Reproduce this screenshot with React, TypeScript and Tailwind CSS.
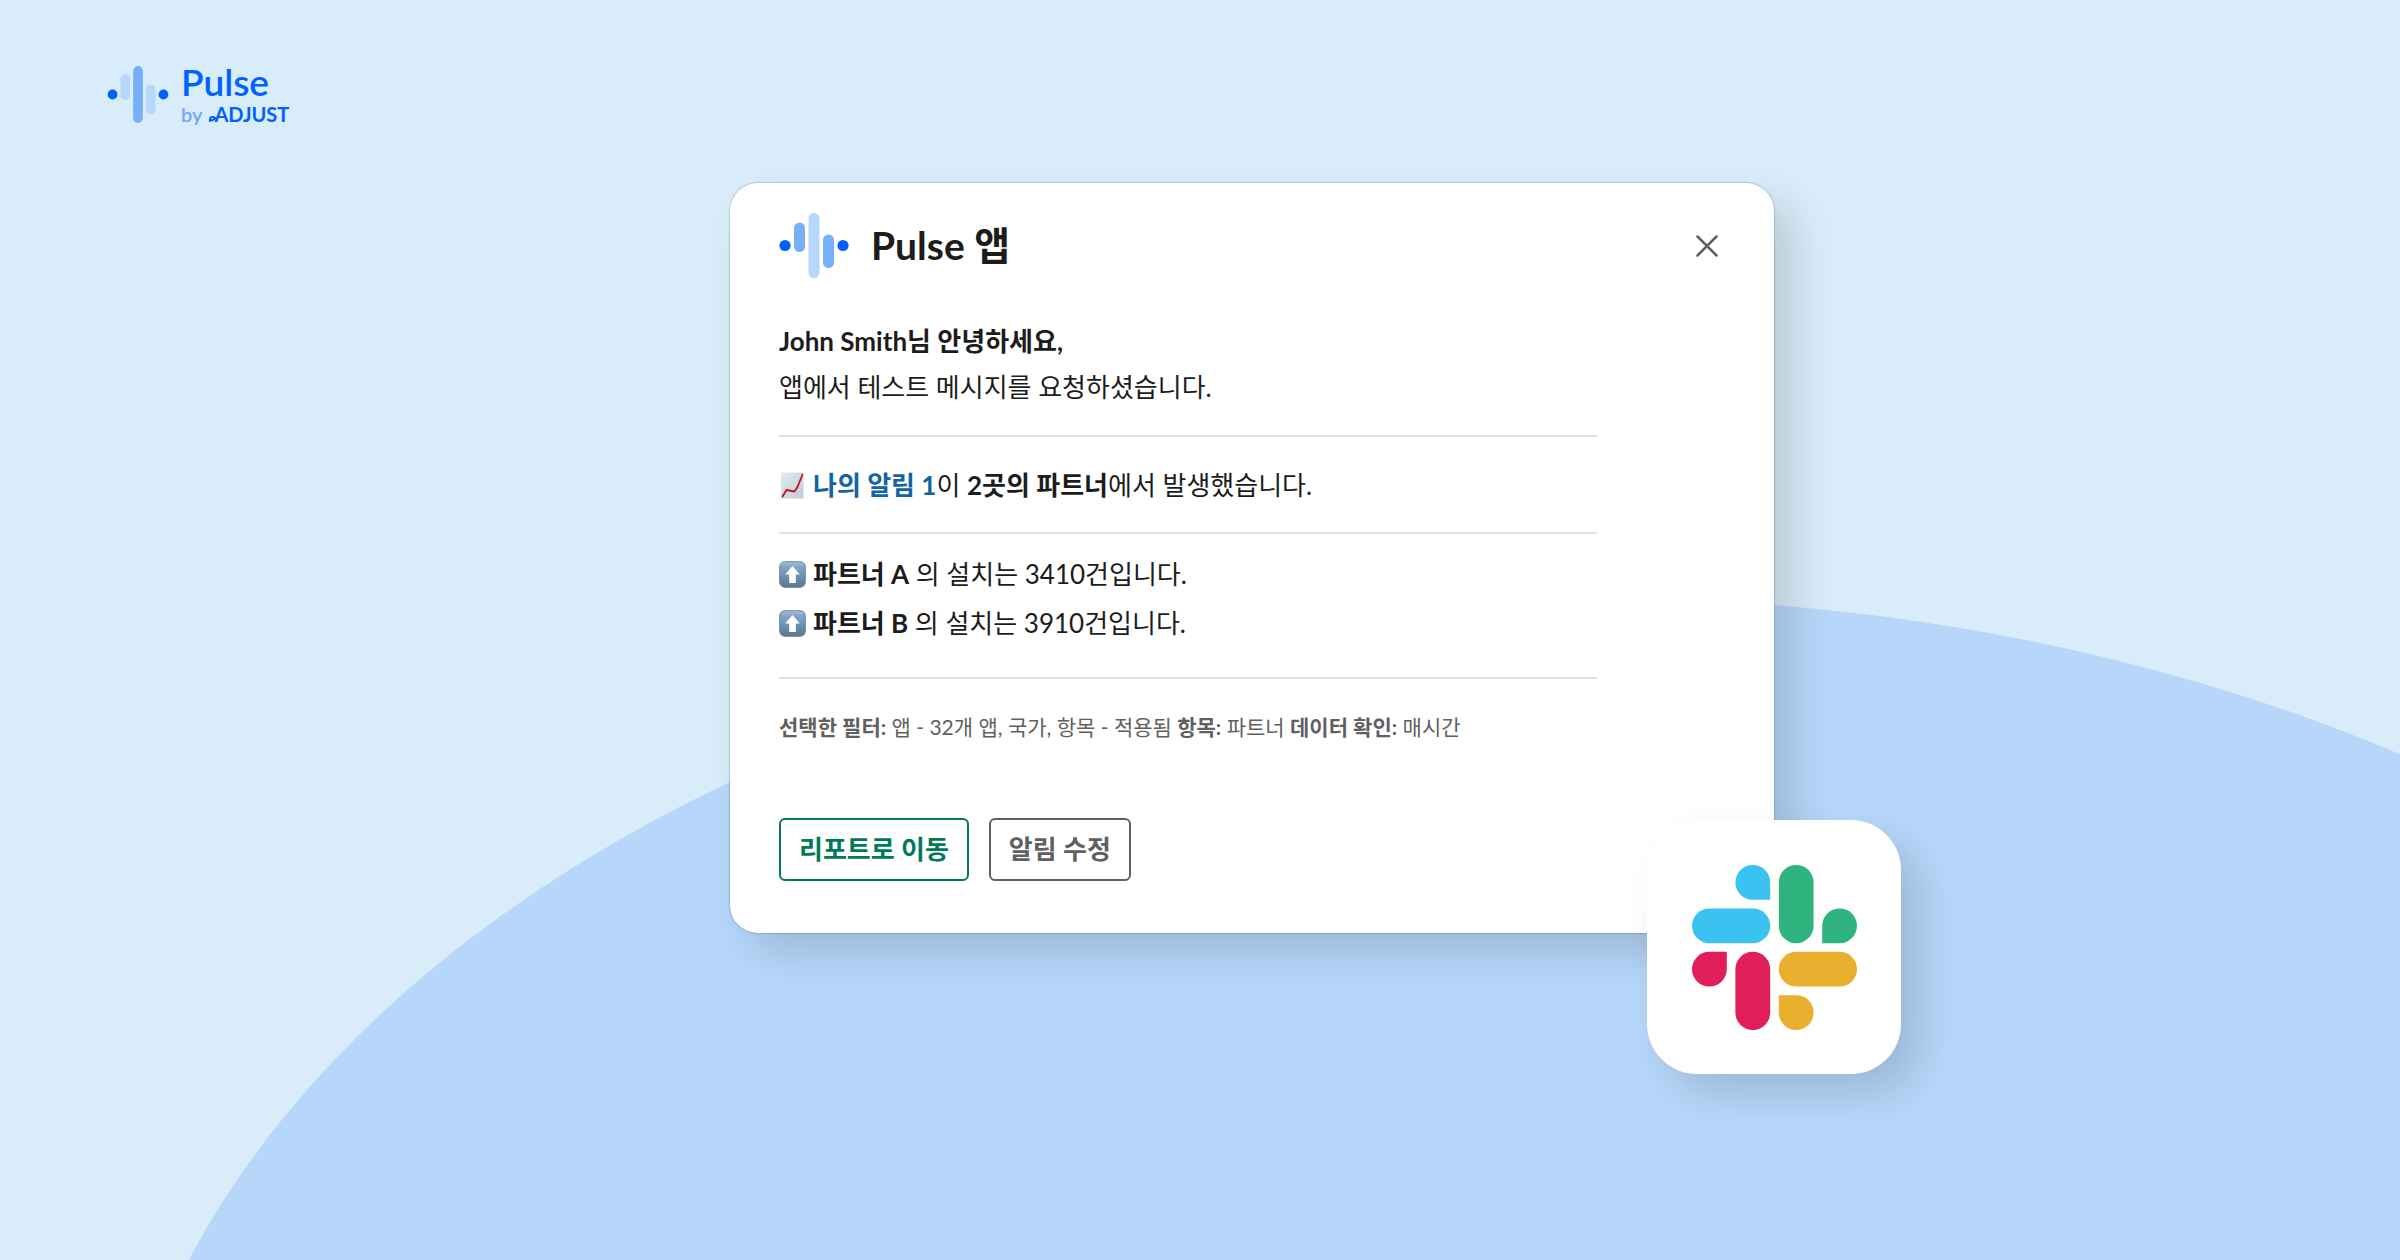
import { useId } from "react";

type PulseMarkProps = {
  className: string;
  side: string;
  center: string;
};

function PulseMark({ className, side, center }: PulseMarkProps) {
  return (
    <svg viewBox="0 0 70 65" className={className} aria-hidden="true">
      <circle cx="6" cy="32.5" r="5.6" fill="#0061ff" />
      <rect x="15" y="9.5" width="11" height="29.5" rx="5.5" fill={side} />
      <rect x="29.5" y="0" width="11" height="65" rx="5.5" fill={center} />
      <rect x="44" y="21.5" width="11" height="33.5" rx="5.5" fill={side} />
      <circle cx="64" cy="32.5" r="5.6" fill="#0061ff" />
    </svg>
  );
}

function BrandLogo() {
  return (
    <a href="#" className="flex w-fit items-start gap-3 text-[#0061ff]">
      <PulseMark className="h-[57px] w-[62px]" side="#b6d7fa" center="#77aff8" />
      <span className="flex flex-col gap-1">
        <span className="text-[37px] leading-[32px] font-semibold">Pulse</span>
        <span className="flex items-baseline gap-1.5 text-[20px] leading-[24px]">
          <span className="font-semibold text-[#75a4fb]">by</span>
          <span className="flex items-baseline font-bold">
            <svg viewBox="0 0 10 10" className="-mr-1 h-2.5 w-2.5" fill="none" aria-hidden="true">
              <path
                d="M2 9C1.5 6 3 4.5 5 5s3 2 5 2.5M2 7.5c2 1.5 4 .5 5-1.5"
                stroke="currentColor"
                strokeWidth="2"
                strokeLinecap="round"
              />
            </svg>
            ADJUST
          </span>
        </span>
      </span>
    </a>
  );
}

function ChartEmoji() {
  const id = useId();
  return (
    <svg viewBox="0 0 27 27" className="size-[27px] shrink-0" role="img" aria-label="차트">
      <defs>
        <linearGradient id={id} x1="0" y1="0" x2="1" y2="1">
          <stop offset="0" stopColor="#e6edf2" />
          <stop offset="1" stopColor="#bfcbd3" />
        </linearGradient>
      </defs>
      <rect x="2" y="0.5" width="22.5" height="26" fill={`url(#${id})`} />
      <path
        d="M6.5 1v25M11 1v25M15.5 1v25M20 1v25M2 6h22.5M2 11h22.5M2 16h22.5M2 21h22.5"
        stroke="#c9dbe8"
        strokeWidth="0.5"
      />
      <path
        d="M3.5 24.5 7.5 18 15.5 19.5 18.5 15 23.5 2.5"
        fill="none"
        stroke="#c8101e"
        strokeWidth="1.8"
        strokeLinejoin="round"
        strokeLinecap="round"
      />
    </svg>
  );
}

function UpEmoji() {
  const id = useId();
  return (
    <svg viewBox="0 0 27 27" className="size-[27px] shrink-0" role="img" aria-label="상승">
      <defs>
        <linearGradient id={id} x1="0" y1="0" x2="0" y2="1">
          <stop offset="0" stopColor="#a3c1da" />
          <stop offset="0.2" stopColor="#84a6c6" />
          <stop offset="1" stopColor="#5a7692" />
        </linearGradient>
      </defs>
      <rect x="0.7" y="0.7" width="25.6" height="25.6" rx="5" fill={`url(#${id})`} stroke="#5f7d98" strokeWidth="0.9" />
      <path d="M13.5 5 20.8 13.5h-4V22h-6.6v-8.5h-4z" fill="#fff" />
    </svg>
  );
}

function SlackLogo() {
  return (
    <svg viewBox="0 0 165 165" className="size-[165px]" role="img" aria-label="Slack">
      <g fill="#3ac3f1">
        <path d="M60.8 0A17.4 17.4 0 0 0 60.8 34.8H78.2V17.4A17.4 17.4 0 0 0 60.8 0Z" />
        <rect x="0" y="43.4" width="78.2" height="34.8" rx="17.4" />
      </g>
      <g fill="#2fb47f">
        <rect x="86.8" y="0" width="34.8" height="78.2" rx="17.4" />
        <path d="M130.2 78.2V60.8A17.4 17.4 0 1 1 147.6 78.2Z" />
      </g>
      <g fill="#df1e5a">
        <path d="M34.8 86.8V104.2A17.4 17.4 0 1 1 17.4 86.8Z" />
        <rect x="43.4" y="86.8" width="34.8" height="78.2" rx="17.4" />
      </g>
      <g fill="#e9b02f">
        <rect x="86.8" y="86.8" width="78.2" height="34.8" rx="17.4" />
        <path d="M86.8 130.2H104.2A17.4 17.4 0 1 1 86.8 147.6Z" />
      </g>
    </svg>
  );
}

const partners = [
  { name: "파트너 A", text: "의 설치는 3410건입니다." },
  { name: "파트너 B", text: "의 설치는 3910건입니다." },
];

const filters = [
  { label: "선택한 필터:", value: "앱 - 32개 앱, 국가, 항목 - 적용됨" },
  { label: "항목:", value: "파트너" },
  { label: "데이터 확인:", value: "매시간" },
];

export default function App() {
  return (
    <div className="relative min-h-screen overflow-hidden bg-[#d8ecf9] font-['Lato','Noto_Sans_CJK_KR',sans-serif]">
      {/* Background hill */}
      <svg
        viewBox="0 0 2400 1260"
        preserveAspectRatio="xMidYMax slice"
        className="absolute inset-0 h-full w-full"
        aria-hidden="true"
      >
        <ellipse cx="1596" cy="1589" rx="1492" ry="991" fill="#b6d7fa" />
      </svg>

      <div className="relative">
        <header className="px-[107px] pt-[66px]">
          <BrandLogo />
        </header>

        <main className="flex justify-center pt-[57px] pb-20 pl-[104px]">
          {/* Message card */}
          <section className="relative w-full max-w-[1044px] rounded-[28px] bg-white px-[49px] pt-[30px] pb-[52px] text-[26px] text-[#1d1c1d] shadow-[0_0_1px_1px_rgba(0,40,80,0.16),20px_20px_40px_rgba(0,0,0,0.14)]">
            <div className="flex items-center justify-between">
              <div className="flex items-center gap-[22px]">
                <PulseMark className="h-[65px] w-[70px]" side="#77aff8" center="#b6d7fa" />
                <h1 className="text-[39px] leading-[65px] font-bold">Pulse 앱</h1>
              </div>
              <button type="button" aria-label="닫기" className="text-[#616061]">
                <svg viewBox="0 0 36 36" className="size-9" fill="none" stroke="currentColor" aria-hidden="true">
                  <path d="M8.5 8.5 27.5 27.5M27.5 8.5 8.5 27.5" strokeWidth="2.5" strokeLinecap="round" />
                </svg>
              </button>
            </div>

            <div className="mt-10 leading-[46px]">
              <p className="font-bold">John Smith님 안녕하세요,</p>
              <p>앱에서 테스트 메시지를 요청하셨습니다.</p>
            </div>

            <hr className="mt-[25px] mr-32 border-t-2 border-[#e2e2e2]" />

            <div className="mt-[25px] flex items-center gap-[7px] leading-[46px]">
              <ChartEmoji />
              <p>
                <a href="#" className="font-bold text-[#1264a3]">나의 알림 1</a>이 <b>2곳의 파트너</b>에서 발생했습니다.
              </p>
            </div>

            <hr className="mt-6 mr-32 border-t-2 border-[#e2e2e2]" />

            <ul className="mt-4 leading-[49px]">
              {partners.map((partner) => (
                <li key={partner.name} className="flex items-center gap-[7px]">
                  <UpEmoji />
                  <span>
                    <b>{partner.name}</b> {partner.text}
                  </span>
                </li>
              ))}
            </ul>

            <hr className="mt-[29px] mr-32 border-t-2 border-[#e2e2e2]" />

            <p className="mt-8 text-[21px] leading-8 text-[#616061]">
              {filters.map((filter) => (
                <span key={filter.label}>
                  <b>{filter.label}</b> {filter.value}{" "}
                </span>
              ))}
            </p>

            <div className="mt-[75px] flex gap-5">
              <button
                type="button"
                className="h-[63px] rounded-md border-2 border-[#007a5a] px-[18px] font-bold text-[#007a5a]"
              >
                리포트로 이동
              </button>
              <button
                type="button"
                className="h-[63px] rounded-md border-2 border-[#616061] px-[18px] font-bold text-[#616061]"
              >
                알림 수정
              </button>
            </div>

            {/* Slack badge over the card corner */}
            <div className="absolute -right-[127px] -bottom-[141px] flex size-[254px] items-center justify-center rounded-[50px] bg-white shadow-[20px_20px_40px_rgba(0,0,0,0.14)]">
              <SlackLogo />
            </div>
          </section>
        </main>
      </div>
    </div>
  );
}
